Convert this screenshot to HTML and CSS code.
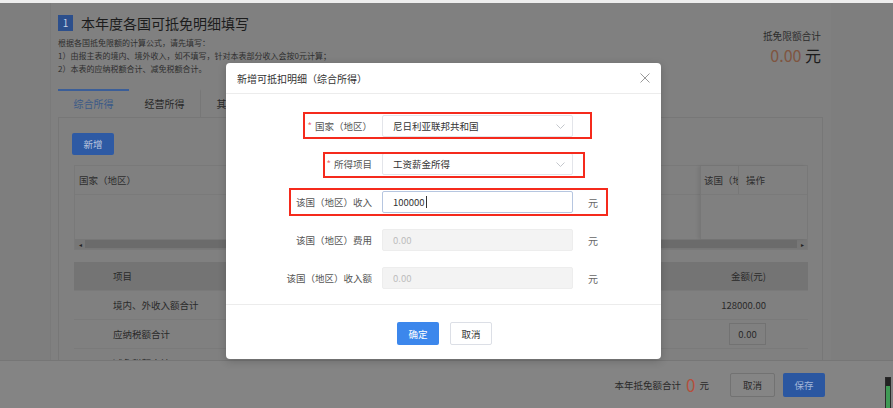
FILE: index.html
```html
<!DOCTYPE html>
<html lang="zh-CN">
<head>
    <meta charset="UTF-8">
    <meta name="viewport" content="width=device-width, initial-scale=1.0">
    <title>境外所得 - 本年度各国可抵免明细</title>
    <link rel="stylesheet" href="styles.css">
</head>
<body>
    <div class="topline"></div>

    <div class="card">
        <div class="head">
            <div class="head-left">
                <h1><span class="step-no">1</span>本年度各国可抵免明细填写</h1>
                <p class="tip">根据各国抵免限额的计算公式，请先填写：</p>
                <p class="tip">1）由报主表的境内、境外收入，如不填写，针对本表部分收入会按0元计算；</p>
                <p class="tip">2）本表的应纳税额合计、减免税额合计。</p>
            </div>
            <div class="head-right">
                <div class="sum-label">抵免限额合计</div>
                <div class="sum-value"><span class="num">0.00</span> 元</div>
            </div>
        </div>

        <div class="tabs">
            <div class="tab active">综合所得</div>
            <div class="tab">经营所得</div>
            <div class="tab">其他所得</div>
        </div>

        <div class="tab-body">
            <button class="btn-add">新增</button>

            <div class="grid">
                <div class="grid-row">
                    <div class="grid-main">
                        <div class="grid-head">国家（地区）</div>
                    </div>
                    <div class="grid-fixed">
                        <div class="grid-head">
                            <span class="cell-cut">该国（地</span>
                            <span class="cell-op">操作</span>
                        </div>
                    </div>
                </div>
                <div class="hscroll">
                    <span class="arrow">&#9666;</span>
                    <span class="thumb"></span>
                    <span class="arrow">&#9656;</span>
                </div>
            </div>

            <table class="summary">
                <tr><th>项目</th><th class="amt">金额(元)</th></tr>
                <tr><td>境内、外收入额合计</td><td class="amt">128000.00</td></tr>
                <tr><td>应纳税额合计</td><td class="amt"><span class="mini-input">0.00</span></td></tr>
                <tr><td>减免税额合计</td><td class="amt">0.00</td></tr>
            </table>
        </div>
    </div>

    <div class="footer-bar">
        <span class="total-label">本年抵免额合计</span>
        <span class="total-num">0</span>
        <span class="total-unit">元</span>
        <button class="btn-plain">取消</button>
        <button class="btn-save">保存</button>
    </div>

    <div class="level-meter"></div>

    <div class="dialog">
        <div class="dialog-head">
            <span>新增可抵扣明细（综合所得）</span>
            <svg class="close" width="10" height="10" viewBox="0 0 10 10">
                <path d="M0.5 0.5 L9.5 9.5 M9.5 0.5 L0.5 9.5" stroke="#9a9a9a" stroke-width="1" fill="none"/>
            </svg>
        </div>

        <div class="dialog-body">
            <div class="form-row">
                <span class="mark mark-1"></span>
                <label><i>*</i>国家（地区）</label>
                <div class="select">
                    <span>尼日利亚联邦共和国</span>
                    <svg width="9" height="5" viewBox="0 0 9 5"><polyline points="0.5,0.5 4.5,4.5 8.5,0.5" stroke="#c4c7cc" fill="none"/></svg>
                </div>
                <span></span>
            </div>
            <div class="form-row">
                <span class="mark mark-2"></span>
                <label><i>*</i>所得项目</label>
                <div class="select">
                    <span>工资薪金所得</span>
                    <svg width="9" height="5" viewBox="0 0 9 5"><polyline points="0.5,0.5 4.5,4.5 8.5,0.5" stroke="#c4c7cc" fill="none"/></svg>
                </div>
                <span></span>
            </div>
            <div class="form-row">
                <span class="mark mark-3"></span>
                <label>该国（地区）收入</label>
                <div class="input focus">100000<span class="caret"></span></div>
                <span class="unit">元</span>
            </div>
            <div class="form-row">
                <label>该国（地区）费用</label>
                <div class="input disabled">0.00</div>
                <span class="unit">元</span>
            </div>
            <div class="form-row">
                <label>该国（地区）收入额</label>
                <div class="input disabled">0.00</div>
                <span class="unit">元</span>
            </div>
        </div>

        <div class="dialog-foot">
            <button class="btn-ok">确定</button>
            <button class="btn-cancel">取消</button>
        </div>
    </div>
</body>
</html>
```

FILE: styles.css
```css
body {
    margin: 0;
    width: 893px;
    height: 408px;
    overflow: hidden;
    position: relative;
    background-color: #7e7e7e;
    font-family: "Noto Sans CJK SC", "Noto Sans", sans-serif;
    color: #2a2a2a;
}
button {
    font-family: inherit;
    cursor: pointer;
}
.topline {
    height: 3px;
    background-color: #ededed;
}

/* page behind the mask (colours already dimmed) */
.card {
    margin-left: 50px;
    width: 765px;
    height: 405px;
    padding: 12px 8px 0 7px;
    background-color: #808080;
    border-left: 1px solid #7a7a7a;
}
.head {
    display: flex;
    justify-content: space-between;
}
h1 {
    margin: 0;
    display: flex;
    align-items: center;
    height: 16px;
    font-size: 14px;
    font-weight: normal;
    color: #1c1c1c;
}
.step-no {
    width: 15px;
    height: 16px;
    margin-right: 8px;
    background-color: #2c4f8c;
    color: #c9d3e6;
    font-size: 10px;
    line-height: 16px;
    text-align: center;
}
.tip {
    margin: 0;
    font-size: 8px;
    line-height: 13px;
    color: #2e2e2e;
}
.tip:first-of-type {
    margin-top: 5px;
}
.head-right {
    margin-top: 15px;
    margin-right: 2px;
    text-align: right;
}
.sum-label {
    font-size: 9.7px;
    line-height: 12px;
    color: #2c2c2c;
}
.sum-value {
    font-size: 16px;
    line-height: 20px;
    color: #1c1c1c;
    margin-top: 3px;
}
.sum-value .num {
    color: #7f5540;
}

.tabs {
    display: flex;
    margin-top: 14px;
}
.tab {
    width: 71px;
    height: 26px;
    line-height: 26px;
    text-align: center;
    font-size: 10px;
    border-top: 2px solid transparent;
    border-right: 1px solid #777;
    color: #2a2a2a;
}
.tab.active {
    border-top-color: #3b5e98;
    border-right: none;
    color: #3b5a88;
}

.tab-body {
    border: 1px solid #777;
    height: 260px;
    padding: 15px 14px 0 15px;
}
.btn-add {
    display: block;
    margin-left: -2px;
    width: 42px;
    height: 22px;
    border: none;
    border-radius: 2px;
    background-color: #2e5aa4;
    color: #bac6de;
    font-size: 9.5px;
}
.grid {
    margin-top: 10px;
    border: 1px solid #797979;
}
.grid-row {
    display: flex;
    height: 73px;
}
.grid-main {
    flex: 1;
}
.grid-head {
    height: 28px;
    line-height: 28px;
    font-size: 9.5px;
    color: #2e2e2e;
    padding-left: 4px;
    border-bottom: 1px solid #7a7a7a;
}
.grid-fixed {
    width: 106px;
    border-left: 1px solid #777;
    box-shadow: -2px 0 3px rgba(0, 0, 0, 0.08);
}
.grid-fixed .grid-head {
    display: flex;
    padding-left: 0;
}
.cell-cut {
    width: 34px;
    padding-left: 3px;
    overflow: hidden;
    white-space: nowrap;
    border-right: 1px solid #777;
}
.cell-op {
    padding-left: 7px;
}
.hscroll {
    display: flex;
    align-items: center;
    height: 10px;
    background-color: #777;
    font-size: 6px;
    color: #222;
}
.hscroll .arrow {
    width: 10px;
    text-align: center;
}
.hscroll .thumb {
    flex: 1;
    height: 8px;
    background-color: #6b6b6b;
}

.summary {
    width: 100%;
    margin-top: 12px;
    border-collapse: collapse;
    font-size: 9.5px;
    color: #2a2a2a;
}
.summary th,
.summary td {
    height: 28px;
    padding: 0 0 0 39px;
    text-align: left;
    font-weight: normal;
    border-bottom: 1px solid #7a7a7a;
}
.summary th {
    background-color: #747474;
}
.summary .amt {
    text-align: right;
    padding: 0 42px 0 0;
}
.mini-input {
    display: inline-block;
    width: 35px;
    height: 20px;
    line-height: 20px;
    text-align: center;
    border: 1px solid #727272;
}

.footer-bar {
    position: absolute;
    left: 0;
    right: 0;
    bottom: 0;
    height: 47px;
    display: flex;
    align-items: center;
    justify-content: flex-end;
    padding-right: 68px;
    background-color: #848484;
    border-top: 1px solid #767676;
    font-size: 9.5px;
    color: #2a2a2a;
}
.total-num {
    font-size: 17px;
    color: #b4503c;
    margin: 0 4px 0 5px;
}
.btn-plain,
.btn-save {
    height: 24px;
    border-radius: 2px;
    font-size: 9.5px;
}
.btn-plain {
    margin-left: 21px;
    width: 45px;
    background-color: #858585;
    border: 1px solid #727272;
    color: #2a2a2a;
}
.btn-save {
    margin-left: 8px;
    width: 42px;
    background-color: #2b57a1;
    border: none;
    color: #a3b6d8;
}
.level-meter {
    position: absolute;
    left: 885px;
    top: 377px;
    width: 4px;
    height: 31px;
    border: 1px solid #2a2a2a;
    background: linear-gradient(#222 0 8px, #3f9a55 8px);
}

/* dialog */
.dialog {
    position: absolute;
    left: 226px;
    top: 63px;
    width: 435px;
    height: 296px;
    background-color: #fff;
    border-radius: 4px;
    box-shadow: 0 2px 8px rgba(0, 0, 0, 0.2);
}
.dialog-head {
    height: 30px;
    padding: 0 11px;
    display: flex;
    align-items: center;
    justify-content: space-between;
    border-bottom: 1px solid #ececec;
    font-size: 10px;
    color: #333;
}
.dialog-body {
    padding: 21px 0 15px;
    border-bottom: 1px solid #ececec;
    display: flex;
    flex-direction: column;
    gap: 16px;
}
.form-row {
    position: relative;
    display: grid;
    grid-template-columns: 146px 191px 1fr;
    column-gap: 10px;
    align-items: center;
    height: 22px;
    font-size: 9.5px;
}
.form-row label {
    text-align: right;
    color: #555;
}
.form-row label i {
    font-style: normal;
    color: #f07070;
    margin-right: 3px;
}
.select,
.input {
    box-sizing: border-box;
    height: 22px;
    padding: 0 7px 0 10px;
    display: flex;
    align-items: center;
    border: 1px solid #e3e5ea;
    border-radius: 2px;
    color: #333;
}
.select {
    justify-content: space-between;
}
.input.focus {
    border-color: #b6c6e0;
}
.input.disabled {
    background-color: #f3f3f3;
    border-color: #ededed;
    color: #bdbdbd;
}
.caret {
    width: 1px;
    height: 12px;
    margin-left: 1px;
    background-color: #333;
}
.unit {
    padding-left: 5px;
    color: #666;
    font-size: 10px;
}

/* red annotation frames */
.mark {
    position: absolute;
    border: 2px solid #f52a1c;
}
.mark-1 {
    left: 77px;
    top: -3px;
    width: 285px;
    height: 23px;
}
.mark-2 {
    left: 97px;
    top: -1px;
    width: 258px;
    height: 22px;
}
.mark-3 {
    left: 63px;
    top: -3px;
    width: 315px;
    height: 24px;
}

.dialog-foot {
    display: flex;
    justify-content: center;
    gap: 11px;
    padding-top: 17px;
}
.btn-ok,
.btn-cancel {
    width: 42px;
    height: 23px;
    border-radius: 2px;
    font-size: 9.5px;
}
.btn-ok {
    margin-left: 2px;
    border: none;
    background-color: #3c87ec;
    color: #fff;
}
.btn-cancel {
    border: 1px solid #dcdfe6;
    background-color: #fff;
    color: #333;
}
```
